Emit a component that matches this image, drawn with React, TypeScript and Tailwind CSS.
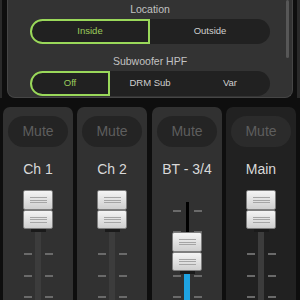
import React from "react";

const font = { fontFamily: '"Liberation Sans", Arial, sans-serif' };

function Cap() {
  const half = (h: string) => (
    <div
      className={`${h} w-[30px] rounded-[2px] border border-[#7e7e7e] bg-gradient-to-b from-[#f4f4f4] to-[#cfcfcf] flex flex-col items-center justify-center gap-[1.5px]`}
    >
      <div className="h-px w-[17px] bg-[#a5a5a5]" />
      <div className="h-px w-[17px] bg-[#a5a5a5]" />
      <div className="h-px w-[17px] bg-[#a5a5a5]" />
    </div>
  );
  return (
    <div className="flex flex-col items-center">
      {half("h-[20px]")}
      {half("h-[19px]")}
      <div className="h-[3px] w-[15px] bg-[#1a1a1a]" />
    </div>
  );
}

function Ticks({ from }: { from: number }) {
  return (
    <div className="absolute left-0 right-0 top-[30.5px] flex flex-col gap-[19.7px]">
      {[0, 1, 2, 3, 4].map((i) => (
        <div key={i} className={`flex justify-center gap-[13px] ${i < from ? "invisible" : ""}`}>
          <div className="h-[2px] w-[8px] bg-[#6a6a6a]" />
          <div className="h-[2px] w-[8px] bg-[#6a6a6a]" />
        </div>
      ))}
    </div>
  );
}

function Strip({
  name,
  bg,
  muteBg,
  bt,
  className,
}: {
  name: string;
  bg: string;
  muteBg: string;
  bt?: boolean;
  className?: string;
}) {
  return (
    <div className={`w-[70px] h-[200px] rounded-t-[7px] flex flex-col ${bg} ${className ?? ""}`}>
      <div
        className={`mt-[9px] mx-[5px] h-[31px] shrink-0 rounded-full ${muteBg} flex items-center justify-center text-[14px] text-[#5e5e5e]`}
      >
        Mute
      </div>
      <div className="mt-[12px] h-[20px] shrink-0 flex items-center justify-center text-[14px] text-[#d9d9d9]">
        {name}
      </div>
      <div className="relative flex-1">
        <Ticks from={bt ? 0 : 2} />
        {bt ? (
          <>
            <div className="absolute left-[34px] top-[23px] h-[31px] w-[3px] bg-black" />
            <div className="absolute left-[32px] top-[93px] h-[40px] w-[6px] bg-[#1ea3e2]" />
            <div className="absolute left-[20px] top-[53px]">
              <Cap />
            </div>
          </>
        ) : (
          <>
            <div className="absolute left-[32px] top-[50px] h-[80px] w-[6px] bg-[#3c3c3c]" />
            <div className="absolute left-[20px] top-[11px]">
              <Cap />
            </div>
          </>
        )}
      </div>
    </div>
  );
}

function Segmented({
  items,
  selectedWidth,
}: {
  items: string[];
  selectedWidth: string;
}) {
  return (
    <div className="w-[240px] h-[25px] rounded-full bg-[#212121] flex text-[9.5px]">
      <div
        className={`${selectedWidth} h-full rounded-l-full rounded-r-[2px] border-2 border-[#9ad85a] flex items-center justify-center text-[#9ccc5c]`}
      >
        {items[0]}
      </div>
      {items.slice(1).map((t) => (
        <div key={t} className="flex-1 flex items-center justify-center text-[#cfcfcf]">
          {t}
        </div>
      ))}
    </div>
  );
}

export default function App() {
  return (
    <div className="w-[300px] h-[300px] overflow-hidden bg-[#0e0e0e] flex flex-col" style={font}>
      <div className="h-[98px] shrink-0 flex">
        <div className="w-[2px] bg-[#2a2a2a]" />
        <div className="w-[5px]" />
        <div className="relative flex-1 h-full rounded-b-[8px] border border-t-0 border-[#464646] bg-[#333333] flex flex-col items-center">
          <div className="mt-[3px] h-[14px] flex items-center text-[10.5px] text-[#c2c2c2]">
            Location
          </div>
          <div className="mt-[2px]">
            <Segmented items={["Inside", "Outside"]} selectedWidth="w-[120px]" />
          </div>
          <div className="mt-[11px] h-[14px] flex items-center text-[10.5px] text-[#c2c2c2]">
            Subwoofer HPF
          </div>
          <div className="mt-[2px]">
            <Segmented items={["Off", "DRM Sub", "Var"]} selectedWidth="w-[80px]" />
          </div>
          <div className="absolute right-[3px] top-0 h-[58px] w-[3px] rounded-full bg-[#575757]" />
        </div>
        <div className="w-[4px]" />
        <div className="w-[3px] bg-[#2a2a2a]" />
      </div>
      <div className="mt-[9px] flex pl-[3px]">
        <Strip name="Ch 1" bg="bg-[#313131]" muteBg="bg-[#242424]" />
        <Strip name="Ch 2" bg="bg-[#313131]" muteBg="bg-[#242424]" className="ml-[4px]" />
        <Strip name="BT - 3/4" bg="bg-[#313131]" muteBg="bg-[#242424]" bt className="ml-[5px]" />
        <Strip name="Main" bg="bg-[#212121]" muteBg="bg-[#2b2b2b]" className="ml-[4px]" />
      </div>
    </div>
  );
}
